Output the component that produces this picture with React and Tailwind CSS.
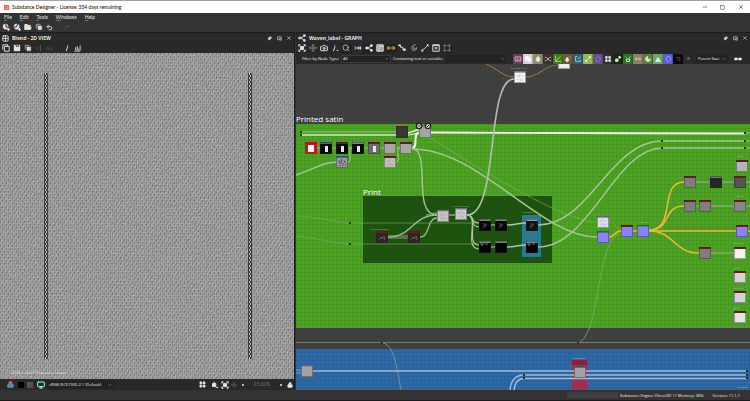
import {
  BarChart3, Camera, ChevronDown, ChevronsRight, Grid2x2,
  LayoutGrid, Link2, Lock, Minus, Monitor, Move, PictureInPicture2, Pin, Redo2,
  Search, Square, Undo2, X,
} from 'lucide-react';

const RED = '#7c161b';
const GRAY = '#858585';
const BLUE = '#8583f5';

// x, y, header colour, fill, kind of thumbnail
const nodes = [
  [305, 142, '#b3151b', '#c01a20', 'box'],
  [320, 142, '#3c6a9c', '#050505', 'bar'],
  [336, 142, RED, '#050505', 'bar'],
  [352, 142, GRAY, '#0a0a0a', 'bar'],
  [368, 142, RED, '#6f6b6e', 'bar'],
  [384, 142, RED, '#a8a3a4'],
  [400, 142, RED, '#a8a3a4'],
  [336, 156, '#3c6a9c', '#95999b', 'grain'],
  [384, 156, RED, '#c4bfbc', 'noise'],
  [396, 126, RED, '#3a3638'],
  [419, 126, '#a5a5a5', '#a5a5a5'],
  [376, 231, RED, '#2c2626', 'dark'],
  [408, 231, RED, '#2c2626', 'dark'],
  [437, 210, '#a9a9a9', '#c4c4c4', 'noise'],
  [455, 208, '#a9a9a9', '#c9c9c9', 'noise'],
  [479, 219, GRAY, '#050505', 'mark'],
  [495, 219, GRAY, '#050505', 'mark'],
  [526, 219, '#9a9a9a', '#111111', 'mark'],
  [479, 241, GRAY, '#050505', 'crown'],
  [495, 241, GRAY, '#050505'],
  [526, 241, GRAY, '#050505', 'crown'],
  [597, 216, '#8c93c9', '#dcdcf3', 'noise'],
  [597, 231, '#5d6aa6', BLUE],
  [621, 225, RED, BLUE],
  [637, 225, '#5b7c9c', BLUE],
  [684, 176, RED, '#827c7c'],
  [710, 176, '#6c7a74', '#262629'],
  [734, 176, RED, '#5a5254'],
  [684, 200, RED, '#827c7c'],
  [699, 200, RED, '#827c7c'],
  [734, 200, RED, '#8b8585'],
  [736, 225, RED, BLUE],
  [699, 247, RED, '#827c7c'],
  [734, 247, RED, '#f4f4f4'],
  [736, 160, RED, '#b5b5b5'],
  [734, 271, '#701b2b', '#d4d4d4'],
  [734, 291, '#701b2b', '#d4d4d4'],
  [734, 311, '#701b2b', '#e4e4e4'],
  [514, 71, '#a8a8a8', '#f3f3f3', 'noise'],
  [558, 57, '#ececec', '#ececec'],
  [301, 365, '#8d8d8d', '#a2a2a2'],
  [574, 366, '#6b6b6b', '#a2a2a2'],
];

// path, colour, width
const wires = [
  ['M301 132H396', '#a7d894', 0.8],
  ['M301 135H396', '#c6ecb8', 1.4],
  ['M408 133C413 132 414 130 419 130', '#e4f5de', 1.4],
  ['M408 135C413 135 414 133 419 133', '#e4f5de', 1.2],
  ['M412 148C419 148 412 133 419 133', '#f2fbef', 2],
  ['M431 132.5C480 132.5 640 133.5 745 133.5', '#f8fdf6', 1.8],
  ['M316 148H400', '#9fb894', 1],
  ['M296 175C316 168 324 162 336 162', '#a6c597', 1.4],
  ['M348 162C354 162 346 148 352 148', '#a6c597', 1],
  ['M396 162C402 162 394 148 400 148', '#a6c597', 1],
  ['M412 149C480 149 540 237 597 237', '#a6c597', 1.5],
  ['M431 138C450 150 560 222 597 222', '#86b774', 0.6],
  ['M412 148C432 150 411 215 437 215', '#a6c597', 1.4],
  ['M296 216C320 217 340 223 350 223H479', '#7fae6d', 0.6],
  ['M296 236C320 239 340 244 350 244H479', '#7fae6d', 0.6],
  ['M388 237C412 237 413 215 437 215', '#a2b59a', 1.4],
  ['M388 236H408M388 238H408', '#a2b59a', 0.8],
  ['M420 237C430 237 427 218 437 218', '#a2b59a', 1.3],
  ['M426 215C430 215 430 213 437 213', '#a2b59a', 1],
  ['M449 215H455', '#c4cdbf', 1],
  ['M467 215C500 215 485 79 514 79', '#b4bcae', 1.6],
  ['M467 215C475 215 470 223 479 223', '#b7c3b0', 1.1],
  ['M467 215C475 215 470 227 479 227', '#b7c3b0', 1.1],
  ['M467 215C480 215 465 245 479 245', '#b7c3b0', 1.1],
  ['M467 215C480 215 463 249 479 249', '#b7c3b0', 1.1],
  ['M491 225H495M491 247H495', '#b7c3b0', 1.2],
  ['M507 225C514 225 519 223 526 223', '#b7c3b0', 1.4],
  ['M507 247C514 247 519 245 526 245', '#b7c3b0', 1.4],
  ['M538 225C590 225 610 141 662 141H745', '#a6c597', 1.5],
  ['M538 247C590 247 615 148 662 148H745', '#a6c597', 1.5],
  ['M745 133H750M745 141H750M745 148H750', '#a6c597', 1],
  ['M609 221C615 221 614 229 621 229', '#b39a2b', 0.7],
  ['M609 237C615 237 614 231 621 231', '#f2b935', 1.5],
  ['M633 231H637', '#f2b935', 1.4],
  ['M649 230C677 230 658 182 684 182', '#f2b935', 1.5],
  ['M649 230C672 230 662 206 684 206', '#f2b935', 1.5],
  ['M649 231H736', '#f2b935', 1.6],
  ['M649 231C674 231 674 253 699 253', '#f2b935', 1.5],
  ['M696 182H710M722 182H734M696 206H699M711 206H734M711 253H734M746 182H750M746 206H750', '#a3ad9d', 1],
  ['M748 231H750', '#f2b935', 1.4],
  ['M578 343C601 336 596 235 621 234', '#7fb267', 0.8],
  ['M296 342.5H750', '#777777', 1],
  ['M383 343C394 345 397 368 401 390', '#8a9aa8', 0.8],
  ['M296 370H301M296 373H301', '#9dbad3', 0.8],
  ['M313 371H747', '#9dbdd8', 1.5],
  ['M510 390C511 380 516 375 524 375H747', '#9dbdd8', 1.4],
  ['M514 390C515 382 518 378.5 524 378.5H747', '#9dbdd8', 1.4],
  ['M486 64C500 70 503 77 514 77', '#8f6e45', 1.1],
  ['M526 77C541 77 543 65 558 65', '#8f6e45', 1.1],
];

const dots = [
  [301, 132], [301, 135], [350, 223], [350, 244], [662, 141], [662, 148],
  [745, 133], [745, 141], [745, 148], [382, 343], [578, 343], [524, 375], [524, 378], [747, 371], [747, 375], [747, 378],
];

const captions = [
  [370, 230, 'Print shape splatter'], [451, 207, 'Print shape splatter'], [522, 213, 'Print opacity'],
  [510, 69, 'Print opacity mask'], [573, 359, 'Base material'], [737, 157, 'Height'], [737, 388, 'Roughness'],
  [736, 197, 'Normal'], [733, 244, 'Base color'], [733, 269, 'Metallic'], [733, 289, 'Roughness'], [733, 309, 'Opacity'],
  [640, 223, 'Normal'],
];

// name, background, icon colour, icon path, filled
const swatches = [
  ['Bitmap', '#6b3f58', '#d9b9cb', 'M1.5 2.5h7v5h-7zM3 6.5l2-2 2 2'],
  ['Blend', '#d4d4d4', '#f8f8f8', 'M2 2h4v5h-4zM5 4h3v4h-3z', true],
  ['Blur', '#8f8c6a', '#f0efdc', 'M5 2c4 4 2 6 0 6s-4-2 0-6z', true],
  ['Channel shuffle', '#3a332d', '#b5aaa0', 'M1 3h2l4 4h2M1 7h2l4-4h2'],
  ['Curve', '#3f7a1a', '#a4d873', 'M2 1v7h7M2 8l6-6'],
  ['Directional blur', '#6b5a3c', '#f0e6d0', 'M4 3c3 3 2 5 0 5s-3-2 0-5zM7 2l1 1', true],
  ['Transformation', '#2f6273', '#9ccbd9', 'M4 2H2v6h6V6M5 5l3-3'],
  ['Gradient', '#93b84d', '#e8f7c3', 'M2 8l6-6M2 6v2h2M6 2h2v2'],
  ['Distance', '#64508c', '#8d78b8', 'M5 2l3 2-1 4h-4l-1-4z'],
  ['FX-Map', '#2f2f2f', '#e0e0e0', 'M2 2h2v2h-2zM6 2h2v2h-2zM2 6h2v2h-2zM6 6h2v2h-2z', true],
  ['Levels', '#18290f', '#d5e3cc', 'M2 5h3v3h-3zM6 2h2v2h-2z', true],
  ['Pixel processor', '#2f6f26', '#d2efcb', 'M2 2l1 1M3 5h4v3h-4zM6 4l2-2'],
  ['Gradient map', '#8a8078', '#f0b265', 'M2 4h2v2h-2zM6 4h2v2h-2z', true],
  ['Normal', '#58803f', '#d3ebc0', 'M5 2a3 3 0 1 0 3 3a2 2 0 0 1-3-3z', true],
  ['Shape', '#6fa56c', '#ddf2da', 'M2 8l3-5 3 5z', true],
  ['Hue', '#4a62e0', '#e07be8', 'M5 2a3 3 0 1 0 1 0z'],
  ['Text', '#0a0a0a', '#444444', 'M2 3h6M4 5h4M5 7h3'],
];

function IconButton({ label, children, className = 'w-[11px]' }) {
  return (
    <button type="button" aria-label={label} className={`flex h-[9px] shrink-0 items-center justify-center ${className}`}>
      {children}
    </button>
  );
}

// small glyph drawn on a 10x10 box
function Glyph({ d, fill = 'none', className = '' }) {
  return (
    <svg viewBox="0 0 10 10" className={`size-2 ${className}`} fill={fill} stroke="currentColor" strokeWidth="1.2">
      <path d={d} />
    </svg>
  );
}

// overlapping sheets, used by the copy and save all buttons
function Sheets() {
  return (
    <svg viewBox="0 0 10 10" className="size-2">
      <path d="M1 1h6v6H1z" fill="#8a8a8a" />
      <path d="M3 3h6v6H3z" fill="#dddddd" stroke="#292929" strokeWidth="0.8" />
    </svg>
  );
}

function Disc({ badge }) {
  return (
    <svg viewBox="0 0 10 10" className="size-2">
      <circle cx="4.5" cy="4.5" r="3.5" fill="#dddddd" />
      <path d={badge} stroke="#333333" strokeWidth="1.2" fill="none" />
      <path d="M8 6v4M6 8h4" stroke="#eeeeee" strokeWidth="1.2" />
    </svg>
  );
}

const graphTools = [
  ['Fit view', <Glyph d="M1 3V1h2M7 1h2v2M9 7v2H7M3 9H1V7M3 3h4v4H3z" fill="currentColor" />],
  ['Center', <Move size={8} className="text-neutral-400" />],
  ['Snapshot', <Camera size={8} strokeWidth={3} />],
  ['Info', <Glyph d="M5 1v1M5 3L3 9M7 8h2" />],
  ['Search', <Search size={8} />, 'w-[11px] bg-[#222222]'],
  ['Disconnect', <Glyph d="M1 3l2 2-2 2M3 5h6M6 3v4M8 3v4" />],
  ['Node links', <Glyph d="M1 4h3v2H1zM4 5l4-3M4 5l4 3M7 1h2v2H7zM7 7h2v2H7z" fill="currentColor" />, 'w-[11px] bg-[#222222]'],
  ['Layout', <Glyph d="M1 1h8v8H1zM4 3h5M4 3v6" fill="#999999" />],
  ['Distribute', <Glyph d="M1 3v4M9 3v4M1 5h8M3 3L1 5l2 2M7 3l2 2-2 2" className="text-[#e3b32b]" />, 'w-[11px] bg-[#222222]'],
  ['Connection style', <Glyph d="M0 2h3v2h3v3h4M1 1h2v2M7 6h2v2H7z" />],
  ['Timing', <Glyph d="M8 4a3 3 0 1 1-3-2M5 1h2M5 4v2h2" className="text-neutral-400" />],
  ['Route', <Glyph d="M1 8l3-2 2-2 3-3M1 7v2h2M7 1h2v2" />],
  ['Material', <Glyph d="M1 1h8v8H1zM1 2h8M5 4v3M3 5h4" />],
  ['Frame', <Glyph d="M2 0v10M8 0v10M0 2h10M0 8h10" className="text-neutral-500" />, 'w-[11px] bg-[#222222]'],
];

function PanelHeader({ title, children }) {
  return (
    <div className="flex h-[11px] items-center border-t border-[#1c1c1c] bg-[#292929] pl-[2px]">
      {children}
      <h2 className="ml-[3px] flex-1 font-['Open_Sans',sans-serif] text-[5px] leading-[9px] font-bold text-neutral-200">{title}</h2>
      <div className="flex text-neutral-200">
        <IconButton label="Pin panel" className="w-[10px]"><Pin size={5} fill="currentColor" className="rotate-45" /></IconButton>
        <IconButton label="Undock panel" className="w-[10px]"><PictureInPicture2 size={5} strokeWidth={3} /></IconButton>
        <IconButton label="Close panel" className="w-[10px]"><X size={6} /></IconButton>
      </div>
    </div>
  );
}

function Fabric() {
  return (
    <svg className="absolute inset-0 h-full w-full" aria-hidden="true">
      <defs>
        <filter id="yarn" x="0" y="0" width="100%" height="100%" colorInterpolationFilters="sRGB">
          <feTurbulence type="fractalNoise" baseFrequency="0.8 0.5" numOctaves="1" seed="4" />
          <feColorMatrix values="0.3 0 0 0 0.45  0.3 0 0 0 0.45  0.3 0 0 0 0.45  0 0 0 0 1" />
        </filter>
        <pattern id="weave" width="4" height="6" patternUnits="userSpaceOnUse">
          <path d="M0 0h1v2H0zM2 3h1v2H2z" fill="#000" fillOpacity="0.18" />
          <path d="M1 1h1v2H1zM3 4h1v2H3z" fill="#fff" fillOpacity="0.15" />
        </pattern>
        <pattern id="stitch" width="4" height="4" patternUnits="userSpaceOnUse">
          <path d="M0 0h4v4H0z" fill="#2c2c2c" />
          <path d="M1 0h1v2H1zM2 2h1v2H2z" fill="#c9c9c9" />
          <path d="M0 2h1v2H0zM3 0h1v2H3z" fill="#4d4d4d" />
        </pattern>
      </defs>
      <rect width="100%" height="100%" filter="url(#yarn)" />
      <rect width="100%" height="100%" fill="url(#weave)" />
      <rect x="44" y="20" width="4" height="286" rx="1" fill="url(#stitch)" />
      <rect x="248" y="20" width="4" height="286" rx="1" fill="url(#stitch)" />
    </svg>
  );
}

function Thumb({ kind }) {
  if (kind === 'box') return <path d="M3 3h6v7H3z" fill="#ffffff" />;
  if (kind === 'bar') return <path d="M5 4h3v6H5z" fill="#e8e8e8" />;
  if (kind === 'noise') return <path d="M3 4l1 2M6 3l-1 3M8 4l1 2M3 8l2 1M6 7l1 3M9 8l-1 2" stroke="#666" strokeOpacity="0.35" strokeWidth="0.8" />;
  if (kind === 'grain') return <path d="M3 4l1 4M6 3l-1 5M8 4l1 3M3 9l2 1M7 7v3M10 8l-1 2" stroke="#3d4a55" strokeWidth="0.8" />;
  if (kind === 'dark') return <path d="M3 9l2-3 1 2 2-3 1 4" stroke="#8d8585" strokeWidth="0.6" fill="none" />;
  if (kind === 'mark') return <path d="M4 5h3v2H5l-1 2" stroke="#777" strokeWidth="0.7" fill="none" />;
  if (kind === 'crown') return <path d="M2 2v2h2V2M6 3h3" stroke="#aaa" strokeWidth="0.7" fill="none" />;
  return null;
}

function Node({ node: [x, y, head, fill, kind] }) {
  return (
    <g transform={`translate(${x} ${y})`}>
      <rect width="12" height="12" fill={fill} />
      <rect width="12" height="2" fill={head} />
      <rect x="0.5" y="0.5" width="11" height="11" fill="none" stroke={kind === 'box' ? '#b3151b' : '#222222'} strokeOpacity="0.4" />
      <Thumb kind={kind} />
    </g>
  );
}

function Graph() {
  return (
    <svg className="absolute inset-0 h-full w-full" role="img" aria-label="Woven_label node graph">
      <defs>
        <pattern id="grid" width="4" height="4" patternUnits="userSpaceOnUse">
          <path d="M0 0h4M0 0v4" stroke="#000" strokeOpacity="0.1" strokeWidth="1" />
        </pattern>
      </defs>
      <rect width="100%" height="100%" fill="#414141" />
      <rect y="60" width="100%" height="204" fill="#4ba321" />
      <rect y="285" width="100%" height="60" fill="#2b69a8" />
      <rect width="100%" height="100%" fill="url(#grid)" />
      <g transform="translate(-296 -64)" fontFamily='"Open Sans", sans-serif'>
        <rect x="363" y="196" width="189" height="67" fill="#1d520f" />
        <rect x="522" y="215" width="19" height="42" fill="#287b8e" />
        <rect x="572" y="360" width="15" height="30" fill="#a22c52" />
        <rect x="572" y="360" width="15" height="5" fill="#8c1d3c" />
        <g fill="none">
          {wires.map(([d, color, width]) => <path key={d} d={d} stroke={color} strokeWidth={width} />)}
        </g>
        {dots.map(([x, y]) => <rect key={`${x}-${y}`} x={x - 1} y={y - 1} width="2" height="2" fill="#26351f" />)}
        {nodes.map((node) => <Node key={`${node[0]}-${node[1]}`} node={node} />)}
        <g fill="#e8e8e8" stroke="#222" strokeWidth="1.4">
          <circle cx="419" cy="126" r="2.6" />
          <circle cx="428" cy="126" r="2.6" />
        </g>
        <path d="M419 125v2M427 127l2-2" stroke="#222" strokeWidth="1" />
        <g fontSize="2" fill="#ffffff" fillOpacity="0.5">
          {captions.map(([x, y, text]) => <text key={`${x}-${y}`} x={x} y={y}>{text}</text>)}
        </g>
        <g fontSize="8" fill="#ffffff">
          <text x="296" y="122">Printed satin</text>
          <text x="363" y="195">Print</text>
        </g>
      </g>
    </svg>
  );
}

function TitleBar() {
  return (
    <header className="flex h-[13px] items-center border-t border-neutral-400 bg-white pl-[4px] text-black">
      <svg viewBox="0 0 10 10" className="size-[5px]" aria-hidden="true">
        <rect width="10" height="10" rx="2" fill="#e0483a" />
        <path d="M5 2l3 2v3L5 8 2 7V4z" fill="none" stroke="#fff" strokeWidth="1.2" />
      </svg>
      <h1 className="ml-[3px] flex-1 text-[5px] leading-[10px]">Substance Designer - License: 354 days remaining</h1>
      <div className="flex gap-[7px] pr-[4px]">
        <IconButton label="Minimize"><Minus size={6} /></IconButton>
        <IconButton label="Maximize"><Square size={5} /></IconButton>
        <IconButton label="Close"><X size={6} /></IconButton>
      </div>
    </header>
  );
}

function PreviewPanel() {
  return (
    <section className="flex w-[295px] shrink-0 flex-col border-r border-[#1c1c1c]">
      <PanelHeader title="Blend - 2D VIEW"><Grid2x2 size={7} strokeWidth={3} className="text-neutral-200" /></PanelHeader>
      <div className="flex h-[10px] items-center bg-[#292929] text-neutral-200">
        <IconButton label="New view"><Glyph d="M1 7V1h6v2M3 3h6v6H3z" /></IconButton>
        <IconButton label="Save">
          <svg viewBox="0 0 10 10" className="size-2">
            <path d="M1 1h8v8H1z" fill="#e5e5e5" />
            <path d="M4 1v2h3V1" stroke="#292929" fill="none" />
          </svg>
        </IconButton>
        <IconButton label="Copy"><Sheets /></IconButton>
        <IconButton label="Flip" className="w-[11px] text-neutral-600"><Glyph d="M7 1v8M1 5h4" /></IconButton>
        <IconButton label="Tile" className="w-[11px] text-neutral-600"><Link2 size={7} /></IconButton>
        <IconButton label="Tile options" className="w-[6px] text-neutral-600"><ChevronDown size={4} /></IconButton>
        <IconButton label="Information"><Glyph d="M6 1v1M6 3L4 9" /></IconButton>
        <IconButton label="Histogram"><BarChart3 size={7} strokeWidth={3} className="-scale-x-100" /></IconButton>
      </div>
      <div className="relative min-h-0 flex-1 overflow-hidden">
        <Fabric />
        <p className="absolute bottom-[3px] left-[11px] text-[4px] leading-[6px] text-white/60">2048 x 2048 (Grayscale, 16bpc)</p>
      </div>
      <div className="flex h-[11px] items-center gap-px bg-[#292929] pl-[5px] text-[5px] text-neutral-200">
        <IconButton label="Channels">
          <svg viewBox="0 0 10 10" className="size-[7px]">
            <circle cx="5" cy="3" r="3" fill="#e05a4a" />
            <circle cx="3" cy="7" r="3" fill="#46a55c" />
            <circle cx="7" cy="7" r="3" fill="#5b84d6" />
          </svg>
        </IconButton>
        <IconButton label="Black background" className="w-[8px]"><span className="size-[6px] bg-black" /></IconButton>
        <IconButton label="Gray background" className="w-[8px]"><span className="size-[6px] bg-neutral-600" /></IconButton>
        <IconButton label="Color management" className="w-[11px] text-teal-200">
          <Monitor size={8} strokeWidth={3} />
        </IconButton>
        <select aria-label="Color profile" className="h-[9px] w-[66px] appearance-none bg-[#222222] pl-[2px] font-['Open_Sans',sans-serif] text-[4px] leading-[8px]">
          <option>sRGB IEC61966-2.1 (Default)</option>
        </select>
        <ChevronDown size={4} className="-ml-[6px]" />
        <span className="flex-1" />
        <IconButton label="Tiling"><LayoutGrid size={7} fill="currentColor" /></IconButton>
        <IconButton label="Lock ratio"><Glyph d="M4 1v3M2 3h4v4H2zM6 8h3" fill="currentColor" /></IconButton>
        <IconButton label="Fit" className="w-[8px]"><Glyph d="M1 3V1h2M7 1h2v2M9 7v2H7M3 9H1V7M3 3h4v4H3z" fill="currentColor" /></IconButton>
        <IconButton label="Center" className="w-[8px] text-neutral-500"><Move size={6} /></IconButton>
        <IconButton label="Zoom out" className="w-[8px]"><Glyph d="M5 4l1 1-1 1-1-1z" fill="currentColor" /></IconButton>
        <span className="w-[28px] text-center text-[5px] text-neutral-500">25.00%</span>
        <IconButton label="Zoom in" className="w-[8px]"><Glyph d="M5 4l1 1-1 1-1-1z" fill="currentColor" /></IconButton>
        <IconButton label="Lock zoom" className="w-[8px]"><Lock size={6} fill="currentColor" /></IconButton>
      </div>
    </section>
  );
}

function FilterBar() {
  return (
    <div className="flex h-[11px] items-center bg-[#292929] pl-[6px] font-['Open_Sans',sans-serif] text-[4px] leading-[9px] text-neutral-100">
      <label htmlFor="node-type" className="w-[39px] whitespace-nowrap">Filter by Node Type:</label>
      <select id="node-type" className="h-[8px] w-[50px] appearance-none border border-[#3a3a3a] bg-[#222222] pl-px text-[4px] leading-[6px]">
        <option>All</option>
      </select>
      <ChevronDown size={4} className="-ml-[6px] mr-[4px]" />
      <label htmlFor="node-text" className="w-[53px] whitespace-nowrap">Containing text or variable:</label>
      <input id="node-text" className="h-[8px] w-[60px] bg-[#222222]" />
      <ChevronDown size={4} className="-ml-[5px]" />
      <div className="ml-[8px] flex">
        {swatches.map(([name, color, ink, d, filled]) => (
          <button
            key={name}
            type="button"
            aria-label={name}
            className="flex h-[10px] w-[10px] shrink-0 items-center justify-center border-r border-black/20"
            style={{ backgroundColor: color, color: ink }}
          >
            <Glyph d={d} fill={filled ? 'currentColor' : 'none'} />
          </button>
        ))}
      </div>
      <IconButton label="More nodes"><ChevronsRight size={5} /></IconButton>
      <button type="button" className="ml-[2px] flex h-[9px] items-center gap-[2px] bg-[#222222] px-[2px] whitespace-nowrap">
        Parent Size: <ChevronDown size={4} />
      </button>
      <IconButton label="Link size" className="ml-[5px] w-[11px]"><Glyph d="M1 4h3v2H1zM6 4h3v2H6z" fill="currentColor" /></IconButton>
    </div>
  );
}

function GraphPanel() {
  return (
    <section className="ml-px flex min-w-0 flex-1 flex-col">
      <PanelHeader title="Woven_label - GRAPH">
        <Glyph d="M1 4h3v2H1zM4 5l4-3M4 5l4 3M7 1h2v2H7zM7 7h2v2H7z" fill="currentColor" className="text-neutral-300" />
      </PanelHeader>
      <div className="flex h-[10px] items-center bg-[#292929]">
        <div className="flex w-[157px] justify-between text-neutral-200">
          {graphTools.map(([label, icon, look]) => <IconButton key={label} label={label} className={look}>{icon}</IconButton>)}
        </div>
      </div>
      <FilterBar />
      <div className="relative min-h-0 flex-1 overflow-hidden">
        <Graph />
      </div>
    </section>
  );
}

export default function App() {
  return (
    <div className="flex h-screen flex-col overflow-hidden bg-[#333333] font-['Lato',sans-serif] text-neutral-200">
      <TitleBar />
      <nav className="flex h-[9px] items-center gap-[8px] pl-[4px] text-[5px] leading-[9px]">
        {['File', 'Edit', 'Tools', 'Windows', 'Help'].map((item) => (
          <button key={item} type="button"><span className="underline decoration-neutral-500">{item[0]}</span>{item.slice(1)}</button>
        ))}
      </nav>
      <div className="flex h-[10px] items-center">
        <IconButton label="New substance"><Disc badge="M5 1v4h4" /></IconButton>
        <IconButton label="New package"><Disc badge="M1 5h3l2-4" /></IconButton>
        <IconButton label="Open"><Glyph d="M1 8V2h3l1 1h3v1M1 8l2-3h6L8 8z" fill="currentColor" /></IconButton>
        <IconButton label="Save all"><Sheets /></IconButton>
        <IconButton label="Undo"><Undo2 size={7} strokeWidth={3} /></IconButton>
        <IconButton label="Undo history" className="w-[6px] text-neutral-500"><ChevronDown size={4} /></IconButton>
        <IconButton label="Redo" className="w-[11px] text-neutral-600"><Redo2 size={7} /></IconButton>
        <IconButton label="Redo history" className="w-[6px] text-neutral-600"><ChevronDown size={4} /></IconButton>
      </div>
      <main className="flex min-h-0 flex-1">
        <PreviewPanel />
        <GraphPanel />
      </main>
      <footer className="flex h-[11px] items-center justify-end border-b border-[#1c1c1c] pr-[10px] font-['Open_Sans',sans-serif] text-[4px] leading-[9px] text-neutral-100">
        <span className="mr-[2px] h-[6px] w-[51px] bg-[#404040]" />
        <span>Substance Engine: Direct3D 11 Memory: 38%</span>
        <span className="ml-[9px]">Version: 11.1.1</span>
      </footer>
    </div>
  );
}
